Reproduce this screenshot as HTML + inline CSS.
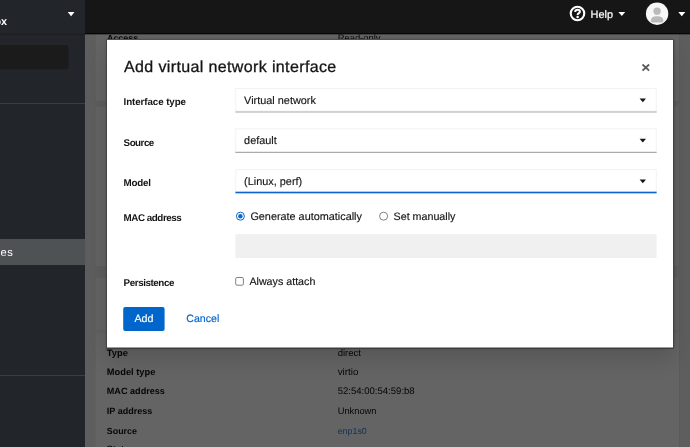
<!DOCTYPE html>
<html lang="en"><head><meta charset="utf-8"><title>Add virtual network interface</title><style>
html,body{margin:0;padding:0}
body{width:690px;height:447px;overflow:hidden;position:relative;background:#5e5e5e;font-family:"Liberation Sans", sans-serif;text-rendering:geometricPrecision;}
svg.layer{position:absolute;left:0;top:0;display:block}
.t{position:absolute;white-space:nowrap;line-height:20px;display:block}
.tl{position:absolute;left:0;top:0;width:690px;height:447px;overflow:hidden;will-change:transform}
#shadow{position:absolute;left:107px;top:40px;width:566px;height:307px;box-shadow:0 0 2px 0.5px rgba(3,3,3,.3),0 10.8px 21.6px 0 rgba(3,3,3,.16),0 0 5.4px 0 rgba(3,3,3,.1)}
</style></head>
<body>
<svg class="layer" width="690" height="447" viewBox="0 0 690 447">
<rect x="0.00" y="0.00" width="690.00" height="447.00" fill="#5e5e5e"/>
<rect x="95.60" y="20.00" width="584.10" height="81.90" fill="#646464"/>
<rect x="95.60" y="106.80" width="584.10" height="160.20" fill="#646464"/>
<rect x="95.60" y="277.80" width="584.10" height="182.20" fill="#646464"/>
<rect x="95.60" y="329.80" width="584.10" height="2.80" fill="#606060"/>
<rect x="679.20" y="20.00" width="0.80" height="81.90" fill="#5a5a5a"/>
<rect x="679.20" y="106.80" width="0.80" height="160.20" fill="#5a5a5a"/>
<rect x="679.20" y="277.80" width="0.80" height="182.20" fill="#5a5a5a"/>
<rect x="95.60" y="101.40" width="584.40" height="0.80" fill="#5a5a5a"/>
<rect x="95.60" y="266.50" width="584.40" height="0.80" fill="#5a5a5a"/>
</svg>
<div class="tl">
<span class="t" style="left:107.00px;top:28px;font-size:8.9px;color:#060606;font-weight:700;">Access</span>
<span class="t" style="left:337.70px;top:28px;font-size:9.4px;color:#060606;">Read-only</span>
<span class="t" style="left:106.80px;top:343px;font-size:9.3px;color:#060606;font-weight:700;">Type</span>
<span class="t" style="left:337.70px;top:344px;font-size:9.5px;color:#060606;">direct</span>
<span class="t" style="left:106.80px;top:362px;font-size:9.3px;color:#060606;font-weight:700;">Model type</span>
<span class="t" style="left:337.70px;top:363px;font-size:9.8px;color:#060606;">virtio</span>
<span class="t" style="left:106.80px;top:381px;font-size:9.1px;color:#060606;font-weight:700;">MAC address</span>
<span class="t" style="left:337.70px;top:382px;font-size:9.55px;color:#060606;">52:54:00:54:59:b8</span>
<span class="t" style="left:106.80px;top:401px;font-size:9.0px;color:#060606;font-weight:700;">IP address</span>
<span class="t" style="left:337.70px;top:401px;font-size:9.3px;color:#060606;">Unknown</span>
<span class="t" style="left:106.80px;top:421px;font-size:8.9px;color:#060606;font-weight:700;">Source</span>
<span class="t" style="left:337.70px;top:421px;font-size:8.9px;color:#0c3258;">enp1s0</span>
<span class="t" style="left:106.80px;top:439px;font-size:9.1px;color:#060606;font-weight:700;">State</span>
<span class="t" style="left:337.70px;top:440px;font-size:9.5px;color:#060606;">up</span>
</div>
<div id="shadow"></div>
<svg class="layer" width="690" height="447" viewBox="0 0 690 447">
<rect x="0.00" y="0.00" width="690.00" height="34.30" fill="#161616"/>
<rect x="85.00" y="33.00" width="605.00" height="1.10" fill="#070707"/>
<g transform="translate(569.5 5.5)"><circle cx="8" cy="8" r="6.75" fill="none" stroke="#fff" stroke-width="2.1"/><path d="M5.7 6.4 C5.7 5 6.8 4.3 8.1 4.3 C9.5 4.3 10.4 5.1 10.4 6.2 C10.4 7.7 8.1 7.6 8.1 9.4" fill="none" stroke="#fff" stroke-width="2"/><circle cx="8.1" cy="11.6" r="1.25" fill="#fff"/></g>
<path d="M618.40 11.90 h6.8 l-3.40 4.2 Z" fill="#fff"/>
<path d="M678.30 12.00 h7.0 l-3.50 4.3 Z" fill="#fff"/>
<g transform="translate(645.9 2.5) scale(0.6222)"><clipPath id="av"><circle cx="18" cy="18" r="18"/></clipPath><circle cx="18" cy="18" r="18" fill="#f7f7f7"/><g clip-path="url(#av)" fill="#bababa"><circle cx="18" cy="13.9" r="5.9"/><path d="M8 29.5 C8 24 12 22.2 18 22.2 C24 22.2 28 24 28 29.5 C28 31.3 27 32.2 25.4 32.2 L10.6 32.2 C9 32.2 8 31.3 8 29.5 Z"/></g></g>
<rect x="0.00" y="0.00" width="85.00" height="447.00" fill="#222529"/>
<rect x="0.00" y="33.90" width="85.00" height="1.00" fill="#1d2023"/>
<path d="M0 45 H66 a2.5 2.5 0 0 1 2.5 2.5 V66.7 a2.5 2.5 0 0 1 -2.5 2.5 H0 Z" fill="#1b1b1c"/>
<rect x="0.00" y="103.00" width="85.00" height="1.00" fill="#3b3e41"/>
<rect x="0.00" y="375.00" width="85.00" height="1.00" fill="#3b3e41"/>
<rect x="0.00" y="239.00" width="85.00" height="26.00" fill="#4f5255"/>
<path d="M67.70 11.90 h6.8 l-3.40 4.4 Z" fill="#fff"/>
<rect x="106.00" y="39.00" width="568.00" height="2.00" fill="#505050"/>
<rect x="106.00" y="40.00" width="568.00" height="307.50" fill="#444"/>
<rect x="106.50" y="346.50" width="567.00" height="2.50" fill="#3c3c3c"/>
<rect x="107.00" y="40.00" width="566.00" height="307.50" fill="#fff"/>
<path d="M642.5 64.5 L649.1 70.7 M649.1 64.5 L642.5 70.7" stroke="#5a5e62" stroke-width="1.8" fill="none"/>
<rect x="235.40" y="88.20" width="421.20" height="24.70" fill="#efefef"/><rect x="236.20" y="89.00" width="419.60" height="21.90" fill="#fff"/><rect x="235.40" y="110.90" width="421.20" height="2.00" fill="#d0d1d2"/><path d="M639.60 98.50 h6.4 l-3.20 3.7 Z" fill="#151515"/>
<rect x="235.40" y="128.40" width="421.20" height="24.60" fill="#efefef"/><rect x="236.20" y="129.20" width="419.60" height="22.60" fill="#fff"/><rect x="235.40" y="151.80" width="421.20" height="1.20" fill="#a9abac"/><path d="M639.60 138.70 h6.4 l-3.20 3.7 Z" fill="#151515"/>
<rect x="235.40" y="169.20" width="421.20" height="24.10" fill="#efefef"/><rect x="236.20" y="170.00" width="419.60" height="21.70" fill="#fff"/><rect x="235.40" y="191.70" width="421.20" height="1.60" fill="#0b63ce"/><path d="M639.60 179.50 h6.4 l-3.20 3.7 Z" fill="#151515"/>
<circle cx="240.4" cy="216.2" r="4.0" fill="#fff" stroke="#0b67d0" stroke-width="1"/><circle cx="240.4" cy="216.2" r="2.2" fill="#0b67d0"/>
<circle cx="383.6" cy="216.2" r="4.0" fill="#fff" stroke="#80808c" stroke-width="1"/>
<rect x="235.40" y="234.10" width="421.20" height="23.90" fill="#f0f0f0"/>
<rect x="235.70" y="277.50" width="7.70" height="7.70" rx="1.3" fill="#fff" stroke="#80808c" stroke-width="1"/>
<rect x="123.20" y="306.90" width="41.40" height="24.10" rx="2" fill="#0066cc"/>
</svg>
<div class="tl">
<span class="t" style="left:590.60px;top:5px;font-size:10.9px;color:#fff;-webkit-text-stroke:0.2px #fff;">Help</span>
<span class="t" style="right:676.70px;top:243px;font-size:11.2px;color:#fff;letter-spacing:0.5px;">Virtual Machines</span>
<span class="t" style="right:682.90px;top:12px;font-size:10.8px;color:#fff;font-weight:700;">fedora-box</span>
<span class="t" style="left:124.00px;top:58px;font-size:16.0px;color:#151515;letter-spacing:0.37px;-webkit-text-stroke:0.3px #151515;">Add virtual network interface</span>
<span class="t" style="left:123.60px;top:93px;font-size:9.8px;color:#151515;font-weight:700;letter-spacing:-0.1px;">Interface type</span>
<span class="t" style="left:123.60px;top:134px;font-size:9.8px;color:#151515;font-weight:700;letter-spacing:-0.5px;">Source</span>
<span class="t" style="left:123.60px;top:174px;font-size:9.8px;color:#151515;font-weight:700;letter-spacing:-0.2px;">Model</span>
<span class="t" style="left:123.60px;top:209px;font-size:9.8px;color:#151515;font-weight:700;letter-spacing:-0.45px;">MAC address</span>
<span class="t" style="left:123.60px;top:274px;font-size:9.8px;color:#151515;font-weight:700;letter-spacing:-0.42px;">Persistence</span>
<span class="t" style="left:244.10px;top:91px;font-size:10.9px;color:#151515;-webkit-text-stroke:0.15px #151515;">Virtual network</span>
<span class="t" style="left:244.10px;top:131px;font-size:10.9px;color:#151515;-webkit-text-stroke:0.15px #151515;">default</span>
<span class="t" style="left:244.10px;top:172px;font-size:10.9px;color:#151515;-webkit-text-stroke:0.15px #151515;">(Linux, perf)</span>
<span class="t" style="left:250.40px;top:207px;font-size:10.85px;color:#151515;-webkit-text-stroke:0.15px #151515;">Generate automatically</span>
<span class="t" style="left:393.60px;top:207px;font-size:10.7px;color:#151515;-webkit-text-stroke:0.15px #151515;">Set manually</span>
<span class="t" style="left:249.40px;top:272px;font-size:10.7px;color:#151515;-webkit-text-stroke:0.15px #151515;">Always attach</span>
<span class="t" style="left:134.40px;top:309px;font-size:10.7px;color:#fff;-webkit-text-stroke:0.15px #fff;">Add</span>
<span class="t" style="left:186.30px;top:309px;font-size:10.6px;color:#0066cc;-webkit-text-stroke:0.15px #0066cc;">Cancel</span>
</div>
</body></html>
